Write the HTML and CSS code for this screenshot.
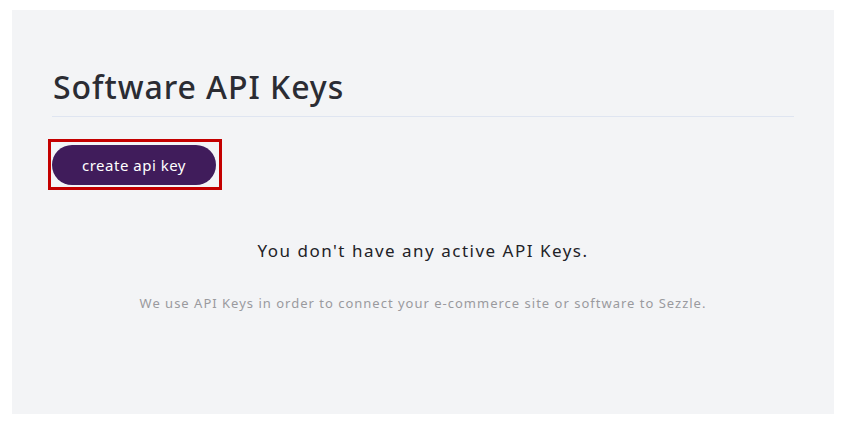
FILE: index.html
```html
<!DOCTYPE html>
<html>
<head>
<meta charset="utf-8">
<link rel="stylesheet" href="styles.css">
</head>
<body>
<main class="panel">
  <h1 class="title">Software API Keys</h1>
  <hr class="divider">
  <div class="actions">
    <span class="highlight">
      <button class="btn-create">create api key</button>
    </span>
  </div>
  <section class="empty">
    <p class="empty-title">You don't have any active API Keys.</p>
    <p class="empty-sub">We use API Keys in order to connect your e-commerce site or software to Sezzle.</p>
  </section>
</main>
</body>
</html>
```

FILE: styles.css
```css
html, body {
  margin: 0;
  padding: 0;
  background: #ffffff;
}
body {
  padding: 10px 11px 10px 12px;
  font-family: "Noto Sans", "DejaVu Sans", sans-serif;
}
.panel {
  background: #f3f4f6;
  height: 404px;
  box-sizing: border-box;
  padding: 57px 40px 0 40px;
}
.title {
  margin: 0;
  font-size: 32px;
  font-weight: 500;
  color: #2b2c33;
  line-height: 40px;
  letter-spacing: 0.95px;
  padding-left: 1px;
}
.divider {
  border: 0;
  border-top: 1px solid #dfe5f1;
  margin: 9px 0 0 0;
}
.actions {
  padding-top: 17px;
  margin-left: -4px;
}
.highlight {
  display: inline-block;
  border: 3px solid #c40000;
  padding: 3px 3px 2px 1px;
  line-height: 0;
}
.btn-create {
  width: 164px;
  height: 40px;
  border: 0;
  border-radius: 20px;
  background: #401c5b;
  color: #ffffff;
  font-family: inherit;
  font-size: 15px;
  line-height: 20px;
  letter-spacing: 0.5px;
  cursor: pointer;
  vertical-align: top;
}
.empty {
  text-align: center;
  padding-top: 50px;
}
.empty-title {
  margin: 0;
  font-size: 17px;
  color: #222227;
  letter-spacing: 1.5px;
  line-height: 22px;
}
.empty-sub {
  margin: 32px 0 0 0;
  font-size: 13px;
  color: #9a9a9e;
  letter-spacing: 1px;
  line-height: 18px;
}
```
